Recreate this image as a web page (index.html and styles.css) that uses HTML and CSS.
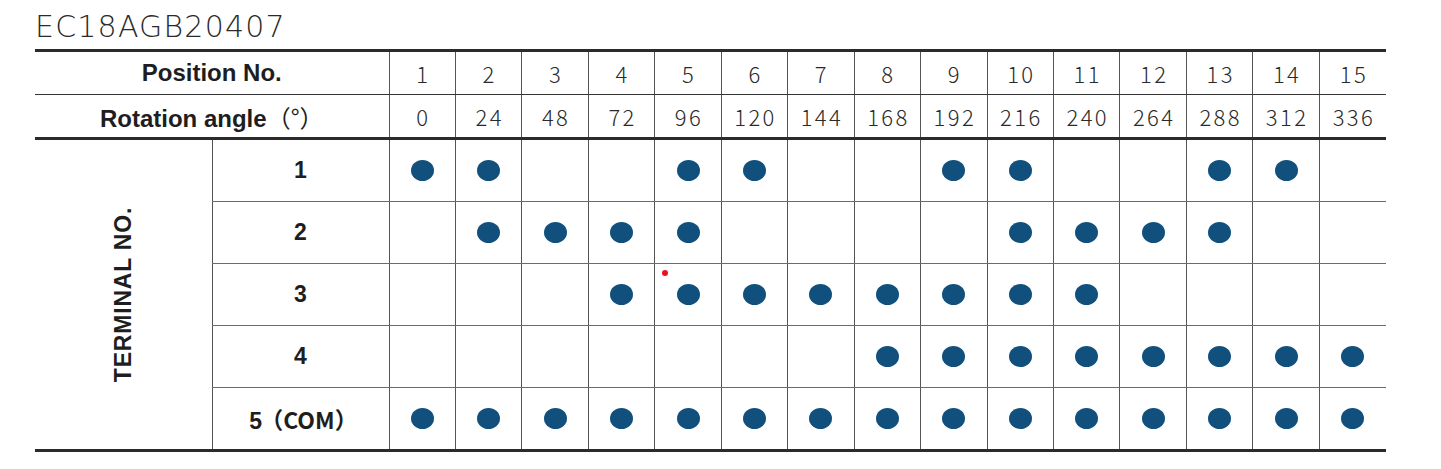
FILE: index.html
```html
<!DOCTYPE html>
<html>
<head>
<meta charset="utf-8">
<link rel="stylesheet" href="styles.css">
</head>
<body>
<div class="page">
  <h1 class="title">EC18AGB20407</h1>
  <div class="wrap">
    <table class="grid">
      <colgroup>
        <col class="c-label"><col class="c-term">
        <col><col><col><col><col><col><col><col><col><col><col><col><col><col><col>
      </colgroup>
      <thead>
        <tr class="hrow">
          <th colspan="2" class="hlabel">Position No.</th>
          <td>1</td><td>2</td><td>3</td><td>4</td><td>5</td><td>6</td><td>7</td><td>8</td><td>9</td><td>10</td><td>11</td><td>12</td><td>13</td><td>14</td><td>15</td>
        </tr>
        <tr class="hrow hrow2">
          <th colspan="2" class="hlabel">Rotation angle<span class="paren">（°）</span></th>
          <td>0</td><td>24</td><td>48</td><td>72</td><td>96</td><td>120</td><td>144</td><td>168</td><td>192</td><td>216</td><td>240</td><td>264</td><td>288</td><td>312</td><td>336</td>
        </tr>
      </thead>
      <tbody id="body">
        <tr class="brow">
          <th rowspan="5" class="vlabel"><span>TERMINAL NO.</span></th>
          <th class="term">1</th>
          <td><i class="dot"></i></td><td><i class="dot"></i></td><td></td><td></td><td><i class="dot"></i></td><td><i class="dot"></i></td><td></td><td></td><td><i class="dot"></i></td><td><i class="dot"></i></td><td></td><td></td><td><i class="dot"></i></td><td><i class="dot"></i></td><td></td>
        </tr>
        <tr class="brow">
          <th class="term">2</th>
          <td></td><td><i class="dot"></i></td><td><i class="dot"></i></td><td><i class="dot"></i></td><td><i class="dot"></i></td><td></td><td></td><td></td><td></td><td><i class="dot"></i></td><td><i class="dot"></i></td><td><i class="dot"></i></td><td><i class="dot"></i></td><td></td><td></td>
        </tr>
        <tr class="brow">
          <th class="term">3</th>
          <td></td><td></td><td></td><td><i class="dot"></i></td><td class="marked"><i class="dot"></i><b class="redmark"></b></td><td><i class="dot"></i></td><td><i class="dot"></i></td><td><i class="dot"></i></td><td><i class="dot"></i></td><td><i class="dot"></i></td><td><i class="dot"></i></td><td></td><td></td><td></td><td></td>
        </tr>
        <tr class="brow">
          <th class="term">4</th>
          <td></td><td></td><td></td><td></td><td></td><td></td><td></td><td><i class="dot"></i></td><td><i class="dot"></i></td><td><i class="dot"></i></td><td><i class="dot"></i></td><td><i class="dot"></i></td><td><i class="dot"></i></td><td><i class="dot"></i></td><td><i class="dot"></i></td>
        </tr>
        <tr class="brow">
          <th class="term">5<span class="paren">（COM）</span></th>
          <td><i class="dot"></i></td><td><i class="dot"></i></td><td><i class="dot"></i></td><td><i class="dot"></i></td><td><i class="dot"></i></td><td><i class="dot"></i></td><td><i class="dot"></i></td><td><i class="dot"></i></td><td><i class="dot"></i></td><td><i class="dot"></i></td><td><i class="dot"></i></td><td><i class="dot"></i></td><td><i class="dot"></i></td><td><i class="dot"></i></td><td><i class="dot"></i></td>
        </tr>
      </tbody>
    </table>
  </div>
</div>
</body>
</html>
```

FILE: styles.css
```css
html, body {
  margin: 0;
  padding: 0;
  background: #ffffff;
}
.page {
  padding: 9px 0 0 35px;
}
.title {
  margin: 0;
  font-family: "DejaVu Sans", "Noto Sans", sans-serif;
  font-weight: 200;
  font-size: 30px;
  line-height: 36px;
  letter-spacing: 1.2px;
  color: #2a2a2a;
  height: 40px;
}
.wrap {
  width: 1351px;
}
.grid {
  width: 1351px;
  table-layout: fixed;
  border-collapse: collapse;
  border-top: 3px solid #2b2b2b;
  border-bottom: 3px solid #2b2b2b;
}
.c-label { width: 177px; }
.c-term { width: 177px; }
.grid td, .grid th {
  padding: 0;
  text-align: center;
  vertical-align: middle;
  color: #222;
}
.hrow td, .hrow th {
  height: 42px;
  border-left: 1px solid #555;
  border-bottom: 1px solid #333;
  font-family: "Noto Sans CJK JP", "Noto Sans", sans-serif;
  font-weight: 300;
  font-size: 22px;
  letter-spacing: 2.4px;
  text-indent: 2px;
  color: #2a2a2a;
}
.hrow2 td, .hrow2 th {
  border-bottom: 3px solid #2b2b2b;
}
.hrow th.hlabel {
  border-left: none;
  font-family: "Liberation Sans", Arial, sans-serif;
  font-weight: 700;
  font-size: 24px;
  letter-spacing: 0;
  text-indent: 0;
  color: #1e1e1e;
}
.paren {
  font-family: "Noto Sans CJK JP", sans-serif;
  font-weight: 400;
}
.brow td, .brow th {
  height: 61px;
  border-left: 1px solid #555;
  border-bottom: 1px solid #6a6a6a;
}
.brow:last-child td, .brow:last-child th {
  border-bottom: none;
}
.brow th.vlabel {
  border-left: none;
  border-bottom: none;
}
.vlabel span {
  display: inline-block;
  transform: rotate(-90deg);
  white-space: nowrap;
  font-family: "Liberation Sans", Arial, sans-serif;
  font-weight: 700;
  font-size: 23px;
  letter-spacing: 0.8px;
  color: #1e1e1e;
}
.brow th.term {
  font-family: "Liberation Sans", Arial, sans-serif;
  font-weight: 700;
  font-size: 23px;
  color: #1e1e1e;
}
.brow th.term .paren {
  font-family: "Noto Sans CJK JP", sans-serif;
  font-weight: 700;
  margin: 0 -6px 0 -2px;
}
.dot {
  display: inline-block;
  width: 23px;
  height: 21px;
  border-radius: 50%;
  background: #11507c;
  vertical-align: middle;
}
.marked {
  position: relative;
}
.redmark {
  position: absolute;
  left: 7px;
  top: 6px;
  width: 6px;
  height: 6px;
  border-radius: 50%;
  background: #e8141c;
}
```
